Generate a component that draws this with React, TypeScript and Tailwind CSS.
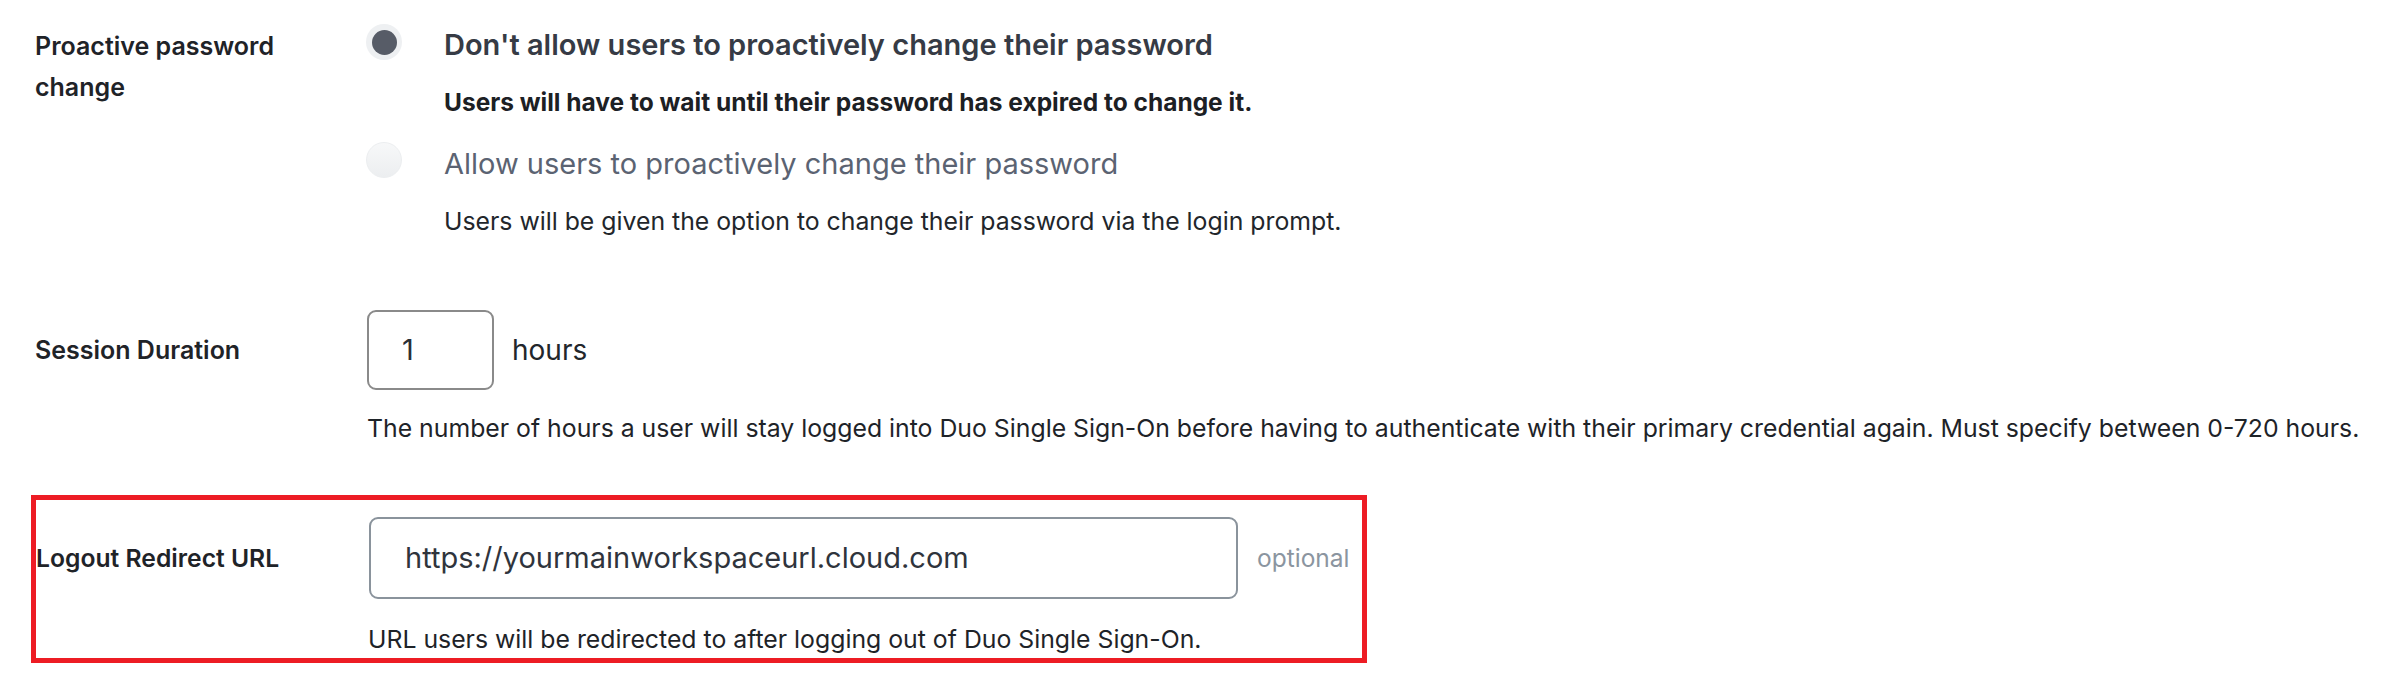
import React from "react";

export default function App() {
  return (
    <div
      className="w-[2389px] h-[676px] bg-white overflow-hidden text-[#1f2328]"
      style={{ fontFamily: "Inter, 'Noto Sans', Arial, sans-serif" }}
    >
      {/* Proactive password change */}
      <div className="flex pl-[35px]">
        <div className="w-[331px] shrink-0 pt-[26px] text-[25px] leading-[41px] font-semibold text-[#1f2328]">
          Proactive password
          <br />
          change
        </div>
        <div className="flex flex-col pt-[24px]">
          <div className="flex items-start">
            <div className="w-[36px] h-[36px] rounded-full bg-[#eef0f2] flex items-center justify-center shrink-0">
              <div className="w-[25px] h-[25px] rounded-full bg-[#575c67]" />
            </div>
            <div className="ml-[42px] pt-[3px] flex flex-col">
              <div className="text-[29px] leading-[36px] font-semibold text-[#363b45]">
                Don't allow users to proactively change their password
              </div>
              <div className="mt-[23px] text-[24.5px] leading-[32px] font-bold text-[#1c2024]">
                Users will have to wait until their password has expired to change it.
              </div>
            </div>
          </div>
          <div className="flex items-start mt-[24px]">
            <div className="w-[36px] h-[36px] rounded-full bg-gradient-to-b from-[#f7f8f9] to-[#eceef0] border border-[#eceef0] shrink-0" />
            <div className="ml-[42px] pt-[4px] flex flex-col">
              <div className="text-[29px] leading-[36px] font-normal text-[#5b6372]">
                Allow users to proactively change their password
              </div>
              <div className="mt-[23px] text-[24.8px] leading-[32px] text-[#22262b]">
                Users will be given the option to change their password via the login prompt.
              </div>
            </div>
          </div>
        </div>
      </div>

      {/* Session Duration */}
      <div className="flex flex-col pl-[35px] mt-[73px]">
        <div className="flex items-center h-[80px]">
          <div className="w-[332px] shrink-0 text-[25px] leading-[32px] font-semibold text-[#1f2328]">
            Session Duration
          </div>
          <div className="w-[127px] h-[80px] rounded-[9px] border-2 border-[#8a8a8a] flex items-center pl-[33px] text-[29px] text-[#2a2f36]">
            1
          </div>
          <div className="ml-[18px] text-[28px] leading-[32px] text-[#22262b]">hours</div>
        </div>
        <div className="ml-[332px] mt-[22px] text-[24.8px] leading-[32px] text-[#1e2328]">
          The number of hours a user will stay logged into Duo Single Sign-On before having to authenticate with their primary credential again. Must specify between 0-720 hours.
        </div>
      </div>

      {/* Logout Redirect URL (highlighted) */}
      <div className="ml-[31px] mt-[51px] w-[1336px] h-[168px] border-[5px] border-[#ed1c24] flex flex-col pt-[17px]">
        <div className="flex items-center h-[82px]">
          <div className="w-[333px] shrink-0 text-[24.7px] leading-[32px] font-semibold text-[#1f2328]">
            Logout Redirect URL
          </div>
          <div className="w-[869px] h-[82px] rounded-[9px] border-2 border-[#8a939c] flex items-center pl-[34px] text-[29px] text-[#2f343c]">
            https://yourmainworkspaceurl.cloud.com
          </div>
          <div className="ml-[19px] text-[24.5px] leading-[32px] text-[#8b95a0]">optional</div>
        </div>
        <div className="ml-[332px] mt-[24px] text-[24.8px] leading-[32px] text-[#1e2328]">
          URL users will be redirected to after logging out of Duo Single Sign-On.
        </div>
      </div>
    </div>
  );
}
